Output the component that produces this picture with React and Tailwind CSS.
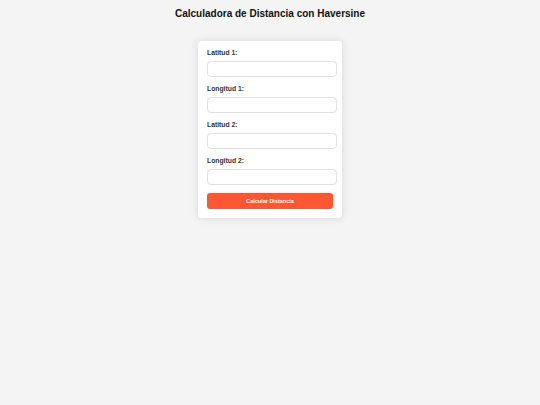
export default function App() {
  const fields = ['Latitud 1:', 'Longitud 1:', 'Latitud 2:', 'Longitud 2:'];

  return (
    <div className="min-h-[405px] bg-[#f4f4f4] pt-[8px] font-['Liberation_Sans',Arial,sans-serif]">
      <h1 className="text-center text-[10px] leading-[12px] font-bold text-[#111]">
        Calculadora de Distancia con Haversine
      </h1>

      <div className="mx-auto mt-[21px] w-[144px] rounded-[4px] bg-white px-[9px] pt-[8px] pb-[9px] shadow-[0_0_8px_rgba(0,0,0,0.12)]">
        {fields.map((label) => (
          <div key={label} className="mb-[8px]">
            <label className="block text-[6.8px] leading-[8px] font-bold text-[#333]">{label}</label>
            <input
              type="text"
              className="mt-[4px] block h-[16px] w-[130px] rounded-[4px] border border-[#e0e0e0] bg-white outline-none"
            />
          </div>
        ))}

        <button className="block h-[16px] w-[126px] rounded-[3px] bg-[#ff5733] text-[5.5px] font-bold text-white">
          Calcular Distancia
        </button>
      </div>
    </div>
  );
}
